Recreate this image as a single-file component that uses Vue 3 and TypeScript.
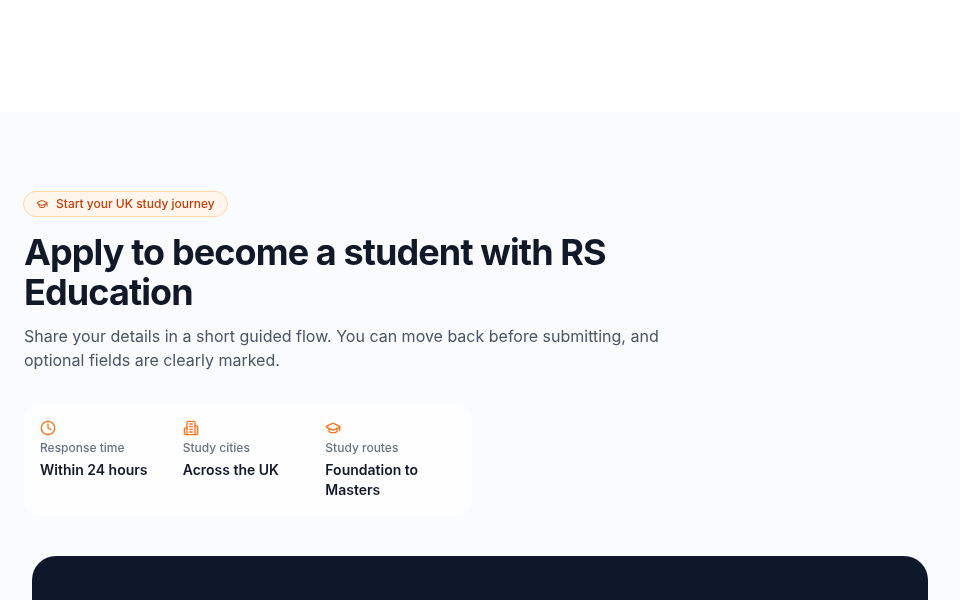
<script setup lang="ts">
interface Stat { label: string; value: string; icon: string }
const stats: Stat[] = [
  { label: 'Response time', value: 'Within 24 hours', icon: 'clock' },
  { label: 'Study cities', value: 'Across the UK', icon: 'building' },
  { label: 'Study routes', value: 'Foundation to Masters', icon: 'cap' },
]
</script>

<template>
  <div class="page">
    <header class="topbar"></header>
    <main class="hero">
      <section class="intro">
        <div class="badge">
          <svg class="badge-icon" viewBox="0 0 24 24" fill="none" stroke="currentColor" stroke-width="2" stroke-linecap="round" stroke-linejoin="round">
            <path d="M21.42 10.92a1 1 0 0 0-.02-1.84L12.83 5.18a2 2 0 0 0-1.66 0L2.6 9.08a1 1 0 0 0 0 1.83l8.57 3.91a2 2 0 0 0 1.66 0z" />
            <path d="M22 10v6" />
            <path d="M6 12.5V16a6 3 0 0 0 12 0v-3.5" />
          </svg>
          <span>Start your UK study journey</span>
        </div>
        <h1>Apply to become a student with RS Education</h1>
        <p class="lead">Share your details in a short guided flow. You can move back before submitting, and optional fields are clearly marked.</p>
        <div class="stats">
          <div v-for="s in stats" :key="s.label" class="stat">
            <svg class="stat-icon" viewBox="0 0 24 24" fill="none" stroke="currentColor" stroke-width="2" stroke-linecap="round" stroke-linejoin="round">
              <template v-if="s.icon === 'clock'">
                <circle cx="12" cy="12" r="10" />
                <path d="M12 6v6l4 2" />
              </template>
              <template v-else-if="s.icon === 'building'">
                <path d="M6 22V4a2 2 0 0 1 2-2h8a2 2 0 0 1 2 2v18Z" />
                <path d="M6 12H4a2 2 0 0 0-2 2v6a2 2 0 0 0 2 2h2" />
                <path d="M18 9h2a2 2 0 0 1 2 2v9a2 2 0 0 1-2 2h-2" />
                <path d="M10 6h4" />
                <path d="M10 10h4" />
                <path d="M10 14h4" />
                <path d="M10 18h4" />
              </template>
              <template v-else>
                <path d="M21.42 10.92a1 1 0 0 0-.02-1.84L12.83 5.18a2 2 0 0 0-1.66 0L2.6 9.08a1 1 0 0 0 0 1.83l8.57 3.91a2 2 0 0 0 1.66 0z" />
                <path d="M22 10v6" />
                <path d="M6 12.5V16a6 3 0 0 0 12 0v-3.5" />
              </template>
            </svg>
            <div class="stat-label">{{ s.label }}</div>
            <div class="stat-value">{{ s.value }}</div>
          </div>
        </div>
      </section>
      <section class="dark"></section>
    </main>
  </div>
</template>

<style>
html, body { margin: 0; overflow: hidden; }
</style>

<style scoped>
.page {
  height: 600px;
  overflow: hidden;
  background: #ffffff;
  font-family: Inter, "Liberation Sans", sans-serif;
}
.topbar { height: 112px; background: #ffffff; }
.hero {
  height: 488px;
  background: #f9fbfd;
  display: flex;
  flex-direction: column;
}
.intro {
  padding: 79px 24px 0;
  display: flex;
  flex-direction: column;
  align-items: flex-start;
  will-change: transform;
}
.badge {
  display: flex;
  align-items: center;
  gap: 8px;
  height: 24px;
  padding: 0 12px;
  margin-left: -1px;
  border: 1px solid #fed7aa;
  border-radius: 999px;
  background: #fff7ed;
  color: #c2410c;
  font-size: 12px;
  font-weight: 500;
  line-height: 16px;
}
.badge-icon { width: 12px; height: 12px; }
h1 {
  margin: 15px 0 0;
  max-width: 672px;
  color: #111827;
  font-size: 36px;
  font-weight: 700;
  line-height: 40px;
  letter-spacing: -0.9px;
}
.lead {
  margin: 12px 0 0;
  max-width: 672px;
  color: #4b5563;
  font-size: 16px;
  line-height: 24px;
}
.stats {
  margin-top: 32px;
  width: 448px;
  box-sizing: border-box;
  padding: 16px;
  display: grid;
  grid-template-columns: repeat(3, 1fr);
  gap: 12px;
  background: #fefeff;
  border-radius: 16px;
  box-shadow: 0 1px 6px rgba(15, 23, 42, 0.012);
}
.stat-icon { display: block; width: 16px; height: 16px; color: #f97316; }
.stat-label {
  margin-top: 4px;
  color: #6b7280;
  font-size: 12px;
  font-weight: 500;
  line-height: 16px;
}
.stat-value {
  margin-top: 4px;
  color: #111827;
  font-size: 14px;
  font-weight: 600;
  line-height: 20px;
}
.dark {
  margin: 40px 32px 0;
  height: 300px;
  flex-shrink: 0;
  background: #0f172a;
  border-radius: 24px;
}
</style>
